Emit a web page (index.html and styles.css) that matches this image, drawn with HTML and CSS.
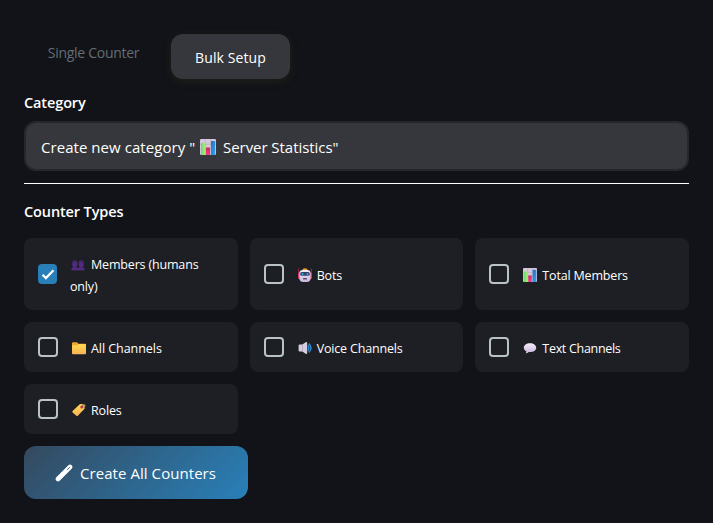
FILE: index.html
```html
<!DOCTYPE html>
<html lang="en">
<head>
<meta charset="utf-8">
<title>Counter Setup</title>
<link rel="stylesheet" href="styles.css">
</head>
<body>
<svg class="defs" aria-hidden="true">
  <defs>
    <linearGradient id="green" x1="0" y1="0" x2="1" y2="0"><stop offset="0" stop-color="#64d77a"/><stop offset="1" stop-color="#a9f06c"/></linearGradient>
    <linearGradient id="pink" x1="0" y1="0" x2="0" y2="1"><stop offset="0" stop-color="#cc2c62"/><stop offset="1" stop-color="#f43b86"/></linearGradient>
    <linearGradient id="blue" x1="0" y1="0" x2="1" y2="1"><stop offset="0" stop-color="#2470bd"/><stop offset="1" stop-color="#35a2f4"/></linearGradient>
    <linearGradient id="gold" x1="0" y1="0" x2="0" y2="1"><stop offset="0" stop-color="#ffd94d"/><stop offset="1" stop-color="#f9b258"/></linearGradient>
    <linearGradient id="lilac" x1="0" y1="0" x2="0" y2="1"><stop offset="0" stop-color="#f4effa"/><stop offset="1" stop-color="#c9b5dc"/></linearGradient>
    <linearGradient id="violet" x1="0" y1="0" x2="0" y2="1"><stop offset="0" stop-color="#432568"/><stop offset="1" stop-color="#5a2f92"/></linearGradient>
    <symbol id="chart" viewBox="0 0 16 16">
      <rect width="16" height="16" rx="1.2" fill="#d5cadb"/>
      <path d="M0 5.3h16M0 10.5h16M5.3 0v16M10.6 0v16" stroke="#b4a5bd" stroke-width=".6"/>
      <rect x="1" y="4" width="4" height="12" fill="url(#green)"/>
      <rect x="6" y="8.5" width="4" height="7.5" fill="url(#pink)"/>
      <rect x="11" y="2" width="4.2" height="14" fill="url(#blue)"/>
    </symbol>
  </defs>
</svg>
<main class="panel">
  <nav class="tabs">
    <button class="tab">Single Counter</button>
    <button class="tab tab-active">Bulk Setup</button>
  </nav>

  <h2 class="heading">Category</h2>
  <div class="select"><span class="select-lead">Create new category "</span><svg class="select-icon"><use href="#chart"/></svg><span class="select-name">Server Statistics"</span></div>
  <hr class="divider">

  <h2 class="heading heading-types">Counter Types</h2>
  <div class="grid">
    <label class="card">
      <span class="box box-checked"><svg viewBox="0 0 19 20"><path d="M4.500 10.700l3.400 3.400 7.600-7.800" fill="none" stroke="#fff" stroke-width="2.200"/></svg></span>
      <span class="text text-members"><svg class="emoji emoji-people" viewBox="0 0 14 14"><g fill="url(#violet)"><rect x="1.3" y="2.2" width="5" height="6.8" rx="2.3"/><rect x="7.7" y="2.2" width="5" height="6.8" rx="2.3"/><path d="M.5 12.3v-1.2Q.5 8.8 3 8.8h2Q7 8.8 7 11Q7 8.8 9 8.8h2q2.5 0 2.5 2.3v1.2z"/></g></svg>Members (humans only)</span>
    </label>
    <label class="card">
      <span class="box"></span>
      <span class="text"><svg class="emoji" viewBox="0 0 14 14"><path d="M4 2.500Q4.500 .3 7 .3t3 2.200z" fill="#f2a51e"/><path d="M.7 .7v4M13.300 .7v4" stroke="#ae254f"/><rect y="4.200" width="14" height="7" rx="1.400" fill="#da3765"/><path d="M1.400 5.400Q1.400 2 5 2h4q3.600 0 3.600 3.400v4.500Q12.600 14 8.700 14H5.300q-3.900 0-3.900-4.100z" fill="url(#lilac)"/><rect x="2.200" y="3.900" width="9.600" height="3.900" rx="1.600" fill="#354269"/><rect x="3.700" y="5" width="1.700" height="2" fill="#2ca6ef"/><rect x="8.600" y="5" width="1.700" height="2" fill="#2ca6ef"/><path d="M5.100 10.800h3.800" stroke="#3f304f" stroke-width="1.200"/></svg>Bots</span>
    </label>
    <label class="card">
      <span class="box"></span>
      <span class="text"><svg class="emoji"><use href="#chart"/></svg>Total Members</span>
    </label>
    <label class="card">
      <span class="box"></span>
      <span class="text text-all"><svg class="emoji" viewBox="0 0 14 14"><path d="M0 2.300q0-1 1-1h4l1.500 1.500H13q1 0 1 1v3H0z" fill="#f0a92e"/><path d="M0 4.200h5.200l1.500-1.100H13q1 0 1 1v8.100q0 1-1 1H1q-1 0-1-1z" fill="url(#gold)"/></svg>All Channels</span>
    </label>
    <label class="card">
      <span class="box"></span>
      <span class="text"><svg class="emoji" viewBox="0 0 14 14"><path d="M.6 4.600q0-1 1-1h2.800l3.200-2.400q1.600-.7 1.600 1v9.600q0 1.700-1.600 1l-3.200-2.400H1.600q-1 0-1-1z" fill="#d5cddd"/><path d="M4.500 3.600v6.800" stroke="#aaa1b3" stroke-width=".7"/><path d="M9.900 4.600q2 2.400 0 4.800M10.800 2.600q4.400 4.400 0 8.800" fill="none" stroke="#2d88d4" stroke-width="1.500"/></svg>Voice Channels</span>
    </label>
    <label class="card">
      <span class="box"></span>
      <span class="text text-tight"><svg class="emoji" viewBox="0 0 14 14"><path d="M7 2.200c3.500 0 6.200 1.800 6.200 4.500S10.500 11.100 7 11.100L5.700 11.100Q4.500 12.500 2.600 12.300Q3.400 11.500 3.300 10.300C1.700 9.500.8 8.200.8 6.700.8 4 3.500 2.200 7 2.200z" fill="url(#lilac)"/></svg>Text Channels</span>
    </label>
    <label class="card">
      <span class="box"></span>
      <span class="text"><svg class="emoji" viewBox="0 0 14 14"><path d="M.6 8L7.800 1.300Q8.200.9 8.800.9L12 1.300q.8.1.9.9L12.700 5q0 .5-.4.900L5.800 12.800q-.7.7-1.400 0L.6 9.400Q0 8.700.6 8z" fill="url(#gold)"/><circle cx="9.800" cy="4" r="1.600" fill="#c93956"/><path d="M9.800 4l1.400-2.200q1.700-1.300 2.200.3.200 1.200-1.200 2.600" fill="none" stroke="#5c5364" stroke-width=".9"/></svg>Roles</span>
    </label>
  </div>

  <button class="create"><svg class="wand" viewBox="0 0 18 18"><path d="M3 15L15 3" stroke="#fff" stroke-width="4.600" stroke-linecap="round"/><path d="M12.400 5.600l2.200-2.200" stroke="#315d80" stroke-width=".9" stroke-linecap="round"/></svg>Create All Counters</button>
</main>
</body>
</html>
```
FILE: styles.css
```css
* { box-sizing: border-box; }

body {
  margin: 0;
  min-height: 100vh;
  background: #121318;
  color: #fff;
  font-family: "Open Sans", "Noto Sans", sans-serif;
  font-size: 13px;
}

.defs { display: block; width: 0; height: 0; }

.panel { padding: 29px 24px 0; }

button { border: 0; font: inherit; color: inherit; white-space: nowrap; }

.tabs { display: flex; gap: 8px; height: 64px; }

.tab {
  width: 139px;
  height: 45px;
  padding: 2px 0 0;
  border-radius: 12px;
  background: none;
  color: #636e72;
  font-size: 14px;
  letter-spacing: -0.28px;
}

.tab-active {
  width: 119px;
  margin-top: 5px;
  background: #36373c;
  color: #fff;
  letter-spacing: 0.1px;
  box-shadow: 0 2px 8px rgba(48, 46, 28, .45);
}

.heading {
  margin: 0;
  height: 28px;
  font-size: 14.5px;
  line-height: 20px;
  font-weight: 600;
  letter-spacing: -0.12px;
}

.select {
  display: flex;
  align-items: center;
  height: 50px;
  padding: 1px 15px 0;
  border: 2px solid #26272c;
  border-radius: 12px;
  background: #36373c;
  font-size: 15px;
  letter-spacing: 0.05px;
  white-space: nowrap;
}

.select-lead { width: 159px; }
.select-icon { width: 16px; height: 16px; margin-right: 7px; }
.select-name { letter-spacing: -0.05px; }

.divider { height: 1px; margin: 12px 0 18px; border: 0; background: #fff; }

.heading-types { height: 36px; }

.grid {
  display: grid;
  grid-template-columns: repeat(3, 1fr);
  grid-template-rows: 72px 50px 50px;
  gap: 12px;
}

.card {
  display: flex;
  align-items: center;
  gap: 12px;
  padding: 0 14px;
  border-radius: 8px;
  background: #1e1f24;
}

.box {
  flex: none;
  width: 20px;
  height: 20px;
  border: 2px solid #b9c2c5;
  border-radius: 4px;
}

.box-checked { border: 0; width: 19px; margin-right: 1px; background: #2980b9; }
.box-checked svg { display: block; width: 19px; height: 20px; }

.text {
  padding-top: 4px;
  line-height: 22px;
  font-size: 12.5px;
  letter-spacing: -0.17px;
}

.text-members { padding-top: 3px; }
.text-all { letter-spacing: -0.05px; }
.text-tight { letter-spacing: -0.3px; }

.emoji {
  width: 14px;
  height: 14px;
  margin: 0 5px 0 2px;
  vertical-align: -2px;
}

.emoji-people { margin-left: 1px; margin-right: 6px; vertical-align: -3px; }

.create {
  display: flex;
  align-items: center;
  width: 224px;
  height: 53px;
  margin-top: 12px;
  padding: 0 31px;
  border-radius: 12px;
  background: linear-gradient(135deg, #34495e, #2980b9);
  font-size: 15px;
  letter-spacing: 0.06px;
}

.wand { flex: none; width: 18px; height: 18px; margin-right: 7px; }
```
